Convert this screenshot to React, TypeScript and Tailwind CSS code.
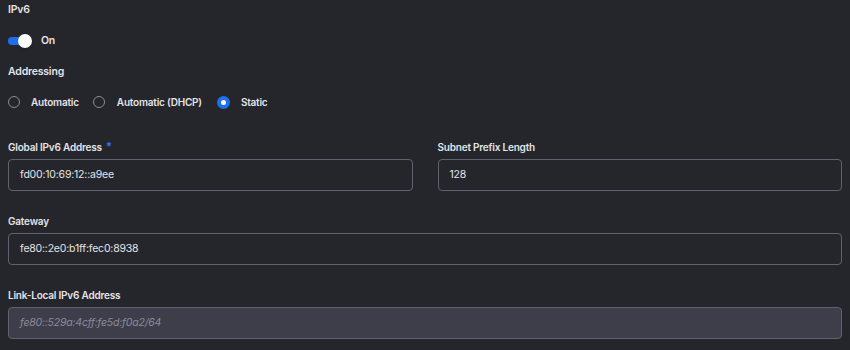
export default function App() {
  const font = { fontFamily: "Inter, 'Noto Sans', sans-serif" };
  return (
    <div className="w-[850px] h-[350px] bg-[#25262b] text-[#e4e4e8] overflow-hidden px-2 pt-[3px]" style={font}>
      <div className="text-[10.5px] font-semibold tracking-[-0.2px] leading-[14px]">IPv6</div>

      <div className="flex items-center gap-[9px] mt-[16px] h-[16px]">
        <div className="relative w-[24px] h-[14px] flex items-center">
          <div className="w-[20px] h-[8px] rounded-full bg-[#1f6feb]" />
          <div className="absolute right-0 top-0 w-[14px] h-[14px] rounded-full bg-white shadow" />
        </div>
        <span className="text-[10.5px] font-semibold tracking-[-0.2px]">On</span>
      </div>

      <div className="text-[10.5px] font-semibold tracking-[-0.2px] leading-[14px] mt-[16px]">Addressing</div>

      <div className="flex items-center mt-[16px] h-[14px] text-[10px] font-semibold tracking-[-0.2px]">
        <span className="w-[12px] h-[12px] rounded-full border border-[#8a8a94]" />
        <span className="ml-[11px]">Automatic</span>
        <span className="ml-[14px] w-[12px] h-[12px] rounded-full border border-[#8a8a94]" />
        <span className="ml-[12px]">Automatic (DHCP)</span>
        <span className="ml-[15px] w-[13px] h-[13px] rounded-full bg-[#1f6feb] flex items-center justify-center">
          <span className="w-[5px] h-[5px] rounded-full bg-white" />
        </span>
        <span className="ml-[11px]">Static</span>
      </div>

      <div className="grid grid-cols-2 gap-[25px] mt-[31px]">
        <div>
          <div className="text-[10px] font-semibold tracking-[-0.2px] leading-[14px] flex items-start">
            Global IPv6 Address
            <span className="text-[#2f7bf5] ml-[4px] text-[11px] leading-[12px]">*</span>
          </div>
          <div className="mt-[5px] h-[32px] rounded-[4px] border border-[#62626f] flex items-center px-[11px] text-[10.5px] tracking-[-0.2px]">
            fd00:10:69:12::a9ee
          </div>
        </div>
        <div>
          <div className="text-[10px] font-semibold tracking-[-0.2px] leading-[14px]">Subnet Prefix Length</div>
          <div className="mt-[5px] h-[32px] rounded-[4px] border border-[#62626f] flex items-center px-[11px] text-[10.5px] tracking-[-0.2px]">
            128
          </div>
        </div>
      </div>

      <div className="mt-[23px]">
        <div className="text-[10px] font-semibold tracking-[-0.2px] leading-[14px]">Gateway</div>
        <div className="mt-[5px] h-[32px] rounded-[4px] border border-[#62626f] flex items-center px-[11px] text-[10.5px] tracking-[-0.2px]">
          fe80::2e0:b1ff:fec0:8938
        </div>
      </div>

      <div className="mt-[23px]">
        <div className="text-[10px] font-semibold tracking-[-0.2px] leading-[14px]">Link-Local IPv6 Address</div>
        <div className="mt-[5px] h-[32px] rounded-[4px] border border-[#62626f] bg-[#3e3e4b] flex items-center px-[11px] text-[10.5px] italic text-[#8c8c98] tracking-[-0.2px]">
          fe80::529a:4cff:fe5d:f0a2/64
        </div>
      </div>
    </div>
  );
}
